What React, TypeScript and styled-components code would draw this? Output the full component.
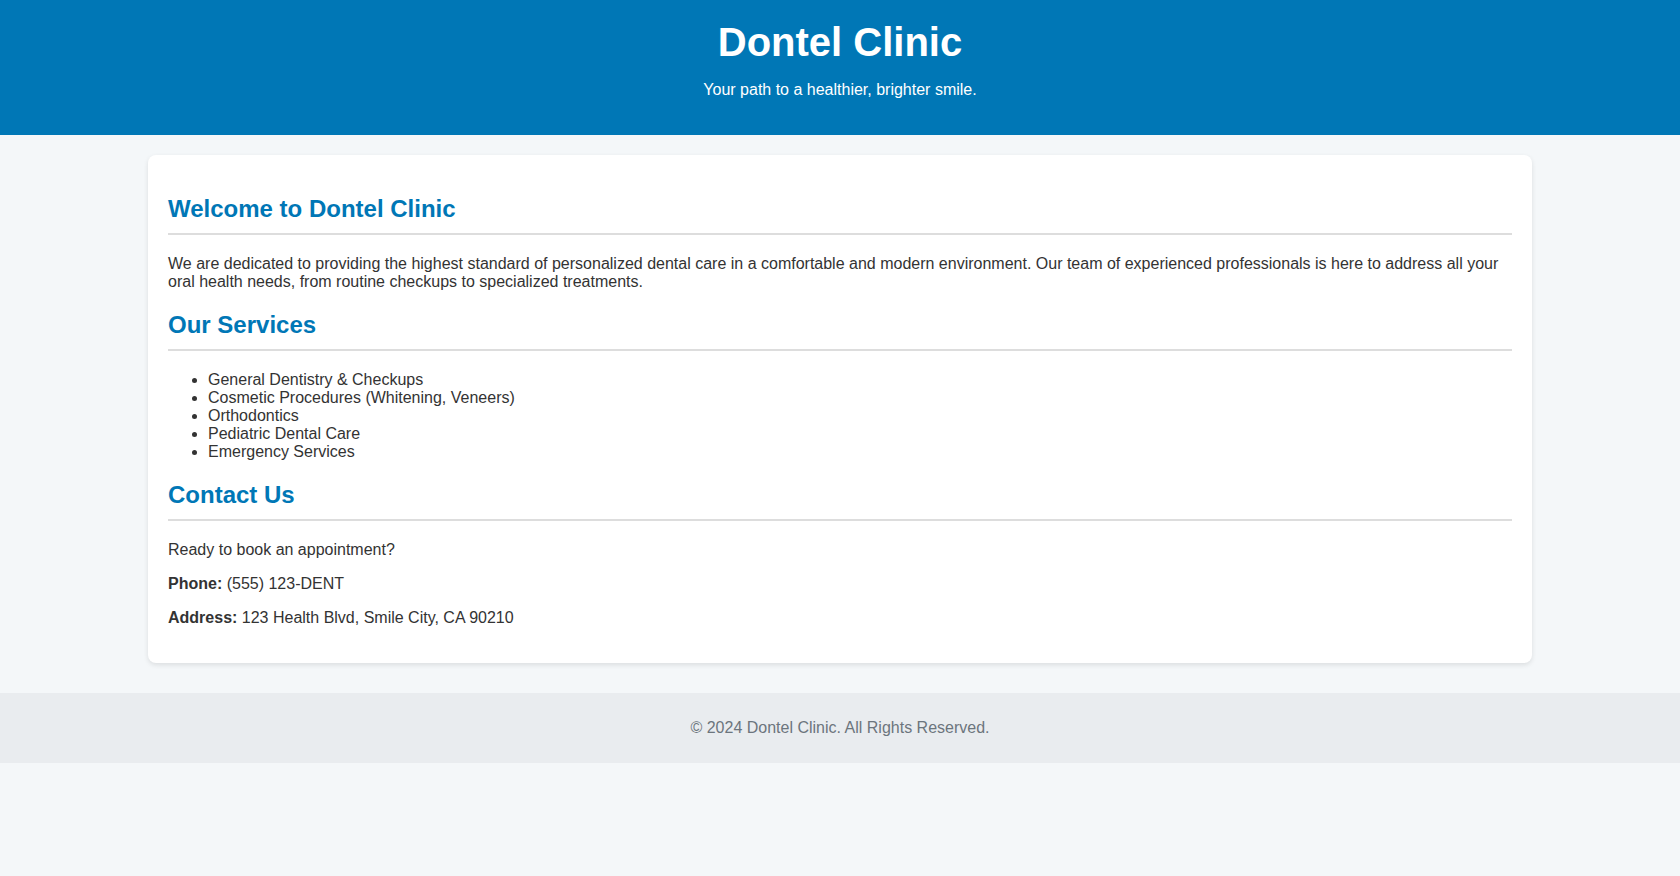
import React from "react";
import styled, { createGlobalStyle } from "styled-components";

const GlobalStyle = createGlobalStyle`
  * {
    box-sizing: border-box;
  }
  html,
  body {
    margin: 0;
    padding: 0;
    background-color: #f4f7f9;
    font-family: "Liberation Sans", Arial, sans-serif;
    color: #333333;
  }
`;

const Header = styled.header`
  background-color: #0077b6;
  color: #ffffff;
  text-align: center;
  padding: 20px;
`;

const Title = styled.h1`
  margin: 0;
  font-size: 40px;
  font-weight: bold;
`;

const Tagline = styled.p`
  margin: 16px 0;
  font-size: 16px;
`;

const Main = styled.main`
  max-width: 1384px;
  margin: 20px auto 30px;
`;

const Card = styled.section`
  background-color: #ffffff;
  border-radius: 8px;
  padding: 20px;
  box-shadow: 0 2px 5px rgba(0, 0, 0, 0.1);
  display: flow-root;
`;

const SectionTitle = styled.h2`
  color: #0077b6;
  font-size: 24px;
  margin: 20px 0;
  padding-bottom: 10px;
  border-bottom: 2px solid #dddddd;
`;

const Text = styled.p`
  margin: 16px 0;
  font-size: 16px;
`;

const ServiceList = styled.ul`
  margin: 16px 0;
  padding-left: 40px;
  font-size: 16px;
`;

const Footer = styled.footer`
  background-color: #e9ecef;
  color: #6c757d;
  text-align: center;
  padding: 10px;
  display: flow-root;
`;

const services = [
  "General Dentistry & Checkups",
  "Cosmetic Procedures (Whitening, Veneers)",
  "Orthodontics",
  "Pediatric Dental Care",
  "Emergency Services",
];

const App = () => {
  return (
    <>
      <GlobalStyle />
      <Header>
        <Title>Dontel Clinic</Title>
        <Tagline>Your path to a healthier, brighter smile.</Tagline>
      </Header>
      <Main>
        <Card>
          <SectionTitle>Welcome to Dontel Clinic</SectionTitle>
          <Text>
            We are dedicated to providing the highest standard of personalized
            dental care in a comfortable and modern environment. Our team of
            experienced professionals is here to address all your oral health
            needs, from routine checkups to specialized treatments.
          </Text>

          <SectionTitle>Our Services</SectionTitle>
          <ServiceList>
            {services.map((s) => (
              <li key={s}>{s}</li>
            ))}
          </ServiceList>

          <SectionTitle>Contact Us</SectionTitle>
          <Text>Ready to book an appointment?</Text>
          <Text>
            <strong>Phone:</strong> (555) 123-DENT
          </Text>
          <Text>
            <strong>Address:</strong> 123 Health Blvd, Smile City, CA 90210
          </Text>
        </Card>
      </Main>
      <Footer>
        <Text>&copy; 2024 Dontel Clinic. All Rights Reserved.</Text>
      </Footer>
    </>
  );
};

export default App;
